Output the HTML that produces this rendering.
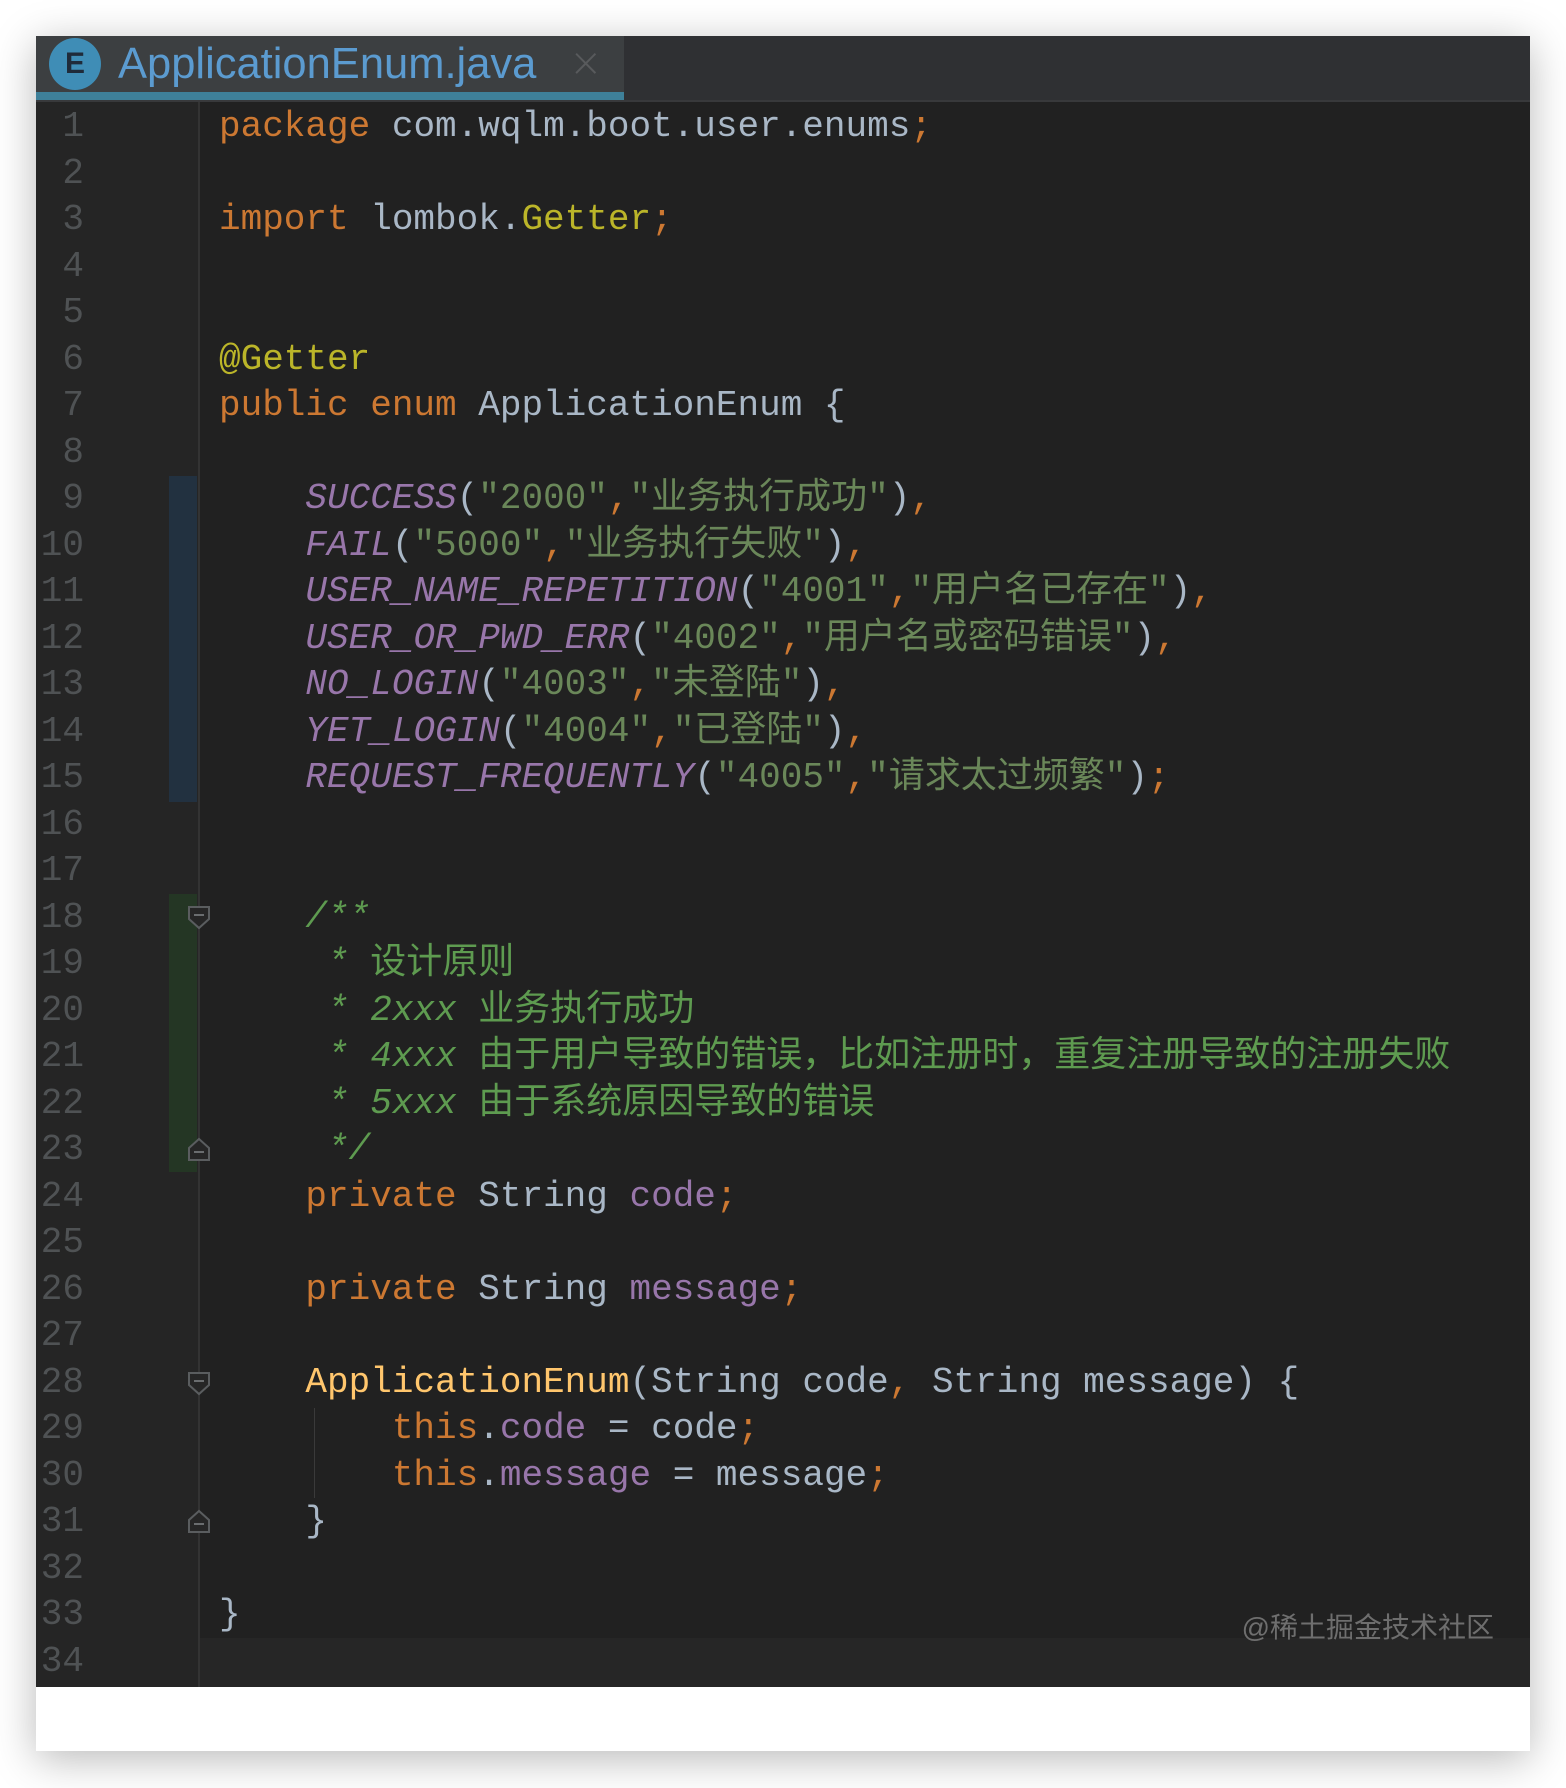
<!DOCTYPE html>
<html><head><meta charset="utf-8">
<style>
html,body{margin:0;padding:0;background:#fff;}
body{width:1566px;height:1788px;position:relative;overflow:hidden;}
#frame{position:absolute;left:36px;top:36px;width:1494px;height:1715px;background:#fff;box-shadow:0 8px 40px rgba(0,0,0,0.28);}
#ed{position:absolute;left:36px;top:36px;width:1494px;height:1651px;background:#212121;overflow:hidden;}
#hdr{position:absolute;left:0;top:0;width:1494px;height:64px;background:#2f3033;border-bottom:2px solid #38393b;}
#tab{position:absolute;left:0;top:0;width:588px;height:56px;background:#3c3f41;border-bottom:8px solid #3e8099;}
#tab .e{position:absolute;left:13px;top:2px;width:52px;height:52px;border-radius:50%;background:#3f8db6;color:#1f2b3a;font:bold 30px "Liberation Sans",sans-serif;text-align:center;line-height:52px;}
#tab .t{position:absolute;left:82px;top:0;font:43.5px "Liberation Sans",sans-serif;color:#5b9bd0;line-height:56px;}
#tab .x{position:absolute;left:533px;top:0;font:300 40px "DejaVu Sans",sans-serif;color:#585a5c;line-height:54px;}
#gut{position:absolute;left:0;top:66px;width:162px;height:1585px;background:#252525;}
#gline{position:absolute;left:162px;top:66px;width:2px;height:1585px;background:#333;}
.bar{position:absolute;left:133px;width:28px;}
.ln{position:absolute;left:0;width:48px;text-align:right;font:36px "Liberation Mono",monospace;color:#4f5254;height:46.5px;line-height:46.5px;}
.cl{position:absolute;left:183px;white-space:pre;font:36px "Liberation Mono","Noto Sans CJK SC",monospace;color:#a9b7c6;height:46.5px;line-height:46.5px;font-synthesis:none;}
.k{color:#cc7832}.a{color:#bbb529}.p{color:#9876aa;font-style:italic}.f{color:#9876aa}
.s{color:#6a8759}.c{color:#5e9b50;font-style:italic}.y{color:#ffc66d}.o{color:#cc7832}
#wm{position:absolute;right:36px;top:1570px;font:28px "Liberation Sans","Noto Sans CJK SC",sans-serif;color:#6e6e6e;}
#cur{position:absolute;left:164px;top:1602px;width:1330px;height:49px;background:#262626;}
</style></head><body>
<div id="frame"></div>
<div id="ed">
 <div id="hdr"><div id="tab"><div class="e">E</div><div class="t">ApplicationEnum.java</div><div class="x">×</div></div></div>
 <div id="gut"></div>
 <div id="cur"></div>
 <div class="bar" style="top:440px;height:326px;background:#223140;"></div>
 <div class="bar" style="top:858px;height:278px;background:#243624;"></div>
 <div id="gline"></div>
 <svg style="position:absolute;left:150px;top:0" width="30" height="1651">
  <g fill="#262626" stroke="#5a5d5f" stroke-width="2">
   <path d="M3 871 h20 v12 l-10 9 l-10 -9 z"/>
   <path d="M3 1124 h20 v-12 l-10 -9 l-10 9 z"/>
   <path d="M3 1337 h20 v12 l-10 9 l-10 -9 z"/>
   <path d="M3 1496 h20 v-12 l-10 -9 l-10 9 z"/>
  </g>
  <g stroke="#6a6d6f" stroke-width="2"><path d="M8 879h10M8 1116h10M8 1345h10M8 1488h10"/></g>
 </svg>
 <div style="position:absolute;left:278px;top:1372px;width:1px;height:90px;background:#3a3a3a"></div>
 <div id="wm">@稀土掘金技术社区</div>
</div>
<div style="position:absolute;left:36px;top:36px;">
<div class="ln" style="top:68px">1</div><div class="ln" style="top:114.5px">2</div><div class="ln" style="top:161px">3</div><div class="ln" style="top:207.5px">4</div><div class="ln" style="top:254px">5</div><div class="ln" style="top:300.5px">6</div><div class="ln" style="top:347px">7</div><div class="ln" style="top:393.5px">8</div><div class="ln" style="top:440px">9</div><div class="ln" style="top:486.5px">10</div><div class="ln" style="top:533px">11</div><div class="ln" style="top:579.5px">12</div><div class="ln" style="top:626px">13</div><div class="ln" style="top:672.5px">14</div><div class="ln" style="top:719px">15</div><div class="ln" style="top:765.5px">16</div><div class="ln" style="top:812px">17</div><div class="ln" style="top:858.5px">18</div><div class="ln" style="top:905px">19</div><div class="ln" style="top:951.5px">20</div><div class="ln" style="top:998px">21</div><div class="ln" style="top:1044.5px">22</div><div class="ln" style="top:1091px">23</div><div class="ln" style="top:1137.5px">24</div><div class="ln" style="top:1184px">25</div><div class="ln" style="top:1230.5px">26</div><div class="ln" style="top:1277px">27</div><div class="ln" style="top:1323.5px">28</div><div class="ln" style="top:1370px">29</div><div class="ln" style="top:1416.5px">30</div><div class="ln" style="top:1463px">31</div><div class="ln" style="top:1509.5px">32</div><div class="ln" style="top:1556px">33</div><div class="ln" style="top:1602.5px">34</div>

<div class="cl" style="top:68px"><span class="k">package</span> com.wqlm.boot.user.enums<span class="o">;</span></div>
<div class="cl" style="top:161px"><span class="k">import</span> lombok.<span class="a">Getter</span><span class="o">;</span></div>
<div class="cl" style="top:300.5px"><span class="a">@Getter</span></div>
<div class="cl" style="top:347px"><span class="k">public enum</span> ApplicationEnum {</div>
<div class="cl" style="top:440px">    <span class="p">SUCCESS</span>(<span class="s">"2000"</span><span class="o">,</span><span class="s">"业务执行成功"</span>)<span class="o">,</span></div>
<div class="cl" style="top:486.5px">    <span class="p">FAIL</span>(<span class="s">"5000"</span><span class="o">,</span><span class="s">"业务执行失败"</span>)<span class="o">,</span></div>
<div class="cl" style="top:533px">    <span class="p">USER_NAME_REPETITION</span>(<span class="s">"4001"</span><span class="o">,</span><span class="s">"用户名已存在"</span>)<span class="o">,</span></div>
<div class="cl" style="top:579.5px">    <span class="p">USER_OR_PWD_ERR</span>(<span class="s">"4002"</span><span class="o">,</span><span class="s">"用户名或密码错误"</span>)<span class="o">,</span></div>
<div class="cl" style="top:626px">    <span class="p">NO_LOGIN</span>(<span class="s">"4003"</span><span class="o">,</span><span class="s">"未登陆"</span>)<span class="o">,</span></div>
<div class="cl" style="top:672.5px">    <span class="p">YET_LOGIN</span>(<span class="s">"4004"</span><span class="o">,</span><span class="s">"已登陆"</span>)<span class="o">,</span></div>
<div class="cl" style="top:719px">    <span class="p">REQUEST_FREQUENTLY</span>(<span class="s">"4005"</span><span class="o">,</span><span class="s">"请求太过频繁"</span>)<span class="o">;</span></div>
<div class="cl c" style="top:858.5px">    /**</div>
<div class="cl c" style="top:905px">     * 设计原则</div>
<div class="cl c" style="top:951.5px">     * 2xxx 业务执行成功</div>
<div class="cl c" style="top:998px">     * 4xxx 由于用户导致的错误，比如注册时，重复注册导致的注册失败</div>
<div class="cl c" style="top:1044.5px">     * 5xxx 由于系统原因导致的错误</div>
<div class="cl c" style="top:1091px">     */</div>
<div class="cl" style="top:1137.5px">    <span class="k">private</span> String <span class="f">code</span><span class="o">;</span></div>
<div class="cl" style="top:1230.5px">    <span class="k">private</span> String <span class="f">message</span><span class="o">;</span></div>
<div class="cl" style="top:1323.5px">    <span class="y">ApplicationEnum</span>(String code<span class="o">,</span> String message) {</div>
<div class="cl" style="top:1370px">        <span class="k">this</span>.<span class="f">code</span> = code<span class="o">;</span></div>
<div class="cl" style="top:1416.5px">        <span class="k">this</span>.<span class="f">message</span> = message<span class="o">;</span></div>
<div class="cl" style="top:1463px">    }</div>
<div class="cl" style="top:1556px">}</div>
</div>
</body></html>
